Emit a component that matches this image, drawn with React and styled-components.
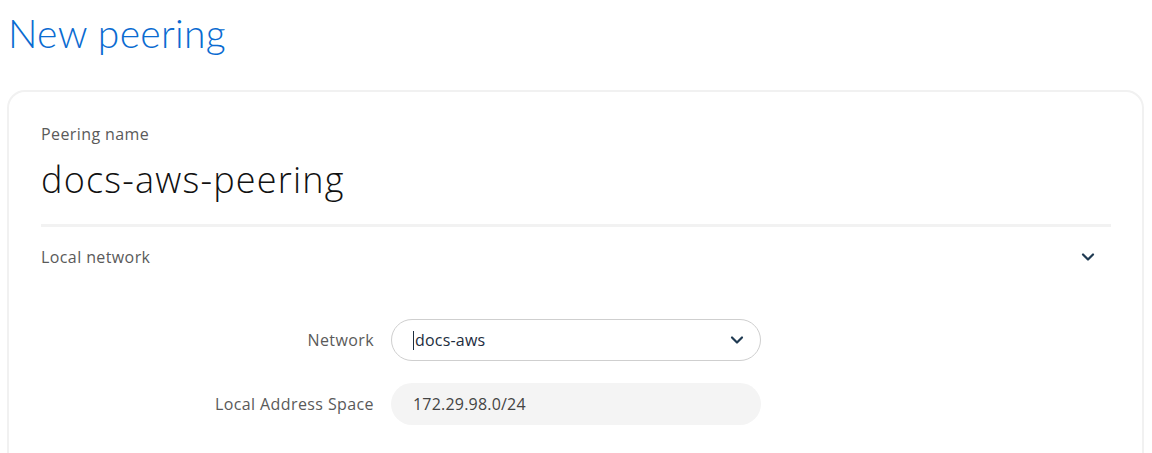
import React from "react";
import styled, { createGlobalStyle } from "styled-components";

const GlobalStyle = createGlobalStyle`
  body {
    margin: 0;
    background: #ffffff;
    font-family: "Open Sans", Lato, sans-serif;
  }
`;

const Page = styled.div`
  padding: 8px 8px 0 7px;
  height: 453px;
  overflow: hidden;
  box-sizing: border-box;
`;

const Title = styled.h1`
  margin: 0 0 0 1px;
  font-family: Lato, sans-serif;
  font-size: 39px;
  font-weight: 300;
  letter-spacing: 0.3px;
  line-height: 50px;
  color: #0a6bd1;
`;

const Card = styled.section`
  margin-top: 32px;
  border: 2px solid #f1f1f1;
  border-radius: 18px;
  padding: 32px 31px 80px 32px;
`;

const FieldLabel = styled.div`
  font-size: 16px;
  letter-spacing: 0.4px;
  color: #5a5a5a;
  line-height: 20px;
`;

const PeeringName = styled.div`
  margin-top: 14px;
  font-size: 36px;
  font-weight: 300;
  letter-spacing: 1.2px;
  color: #111;
  line-height: 44px;
`;

const Divider = styled.hr`
  margin: 22px 0 0;
  border: 0;
  height: 3px;
  background: #f2f2f2;
`;

const SectionHeader = styled.div`
  display: flex;
  align-items: center;
  justify-content: space-between;
  padding: 20px 16px 0 0;
  font-size: 16px;
  letter-spacing: 0.4px;
  color: #5a5a5a;
  line-height: 20px;
`;

const Form = styled.div`
  display: grid;
  grid-template-columns: 333px 370px;
  column-gap: 17px;
  row-gap: 22px;
  margin-top: 52px;
  align-items: center;
`;

const RowLabel = styled.label`
  text-align: right;
  font-size: 16px;
  letter-spacing: 0.4px;
  color: #5a5a5a;
`;

const Field = styled.div`
  display: flex;
  align-items: center;
  justify-content: space-between;
  height: 42px;
  box-sizing: border-box;
  padding: 0 16px 0 21px;
  border-radius: 21px;
  font-size: 16px;
  letter-spacing: 0.2px;
  border: 1px solid ${(p) => (p.$readOnly ? "transparent" : "#cfcfcf")};
  background: ${(p) => (p.$readOnly ? "#f4f4f4" : "#ffffff")};
  color: ${(p) => (p.$readOnly ? "#444" : "#1d2d3e")};
`;

const Caret = styled.span`
  display: inline-block;
  width: 1px;
  height: 19px;
  background: #1d2d3e;
  margin-right: 1px;
  vertical-align: -4px;
`;

function Chevron() {
  return (
    <svg width="14" height="10" viewBox="0 0 14 10" fill="none">
      <path d="M2 2.5 L7 7.5 L12 2.5" stroke="#1f3a52" strokeWidth="2.2" strokeLinecap="round" strokeLinejoin="round" />
    </svg>
  );
}

export default function App() {
  return (
    <Page>
      <GlobalStyle />
      <Title>New peering</Title>
      <Card>
        <FieldLabel>Peering name</FieldLabel>
        <PeeringName>docs-aws-peering</PeeringName>
        <Divider />
        <SectionHeader>
          <span>Local network</span>
          <Chevron />
        </SectionHeader>
        <Form>
          <RowLabel>Network</RowLabel>
          <Field>
            <span><Caret />docs-aws</span>
            <Chevron />
          </Field>
          <RowLabel>Local Address Space</RowLabel>
          <Field $readOnly>172.29.98.0/24</Field>
        </Form>
      </Card>
    </Page>
  );
}
